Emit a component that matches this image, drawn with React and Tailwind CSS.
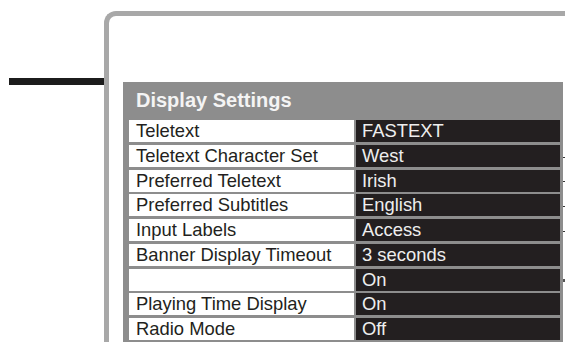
import React from "react";

const rows = [
  ["Teletext", "FASTEXT", false],
  ["Teletext Character Set", "West", true],
  ["Preferred Teletext", "Irish", true],
  ["Preferred Subtitles", "English", true],
  ["Input Labels", "Access", true],
  ["Banner Display Timeout", "3 seconds", false],
  ["", "On", "dot"],
  ["Playing Time Display", "On", false],
  ["Radio Mode", "Off", false],
];

export default function App() {
  return (
    <div
      className="w-[565px] h-[342px] overflow-hidden bg-white flex flex-col"
      style={{ fontFamily: '"Liberation Sans", Arial, sans-serif' }}
    >
      <div className="h-[1px] bg-[#dadada]" />
      <div className="flex pt-[11px] flex-1">
        <div className="w-[104px] shrink-0 flex flex-col">
          <div className="mt-[67px] ml-[9px] h-[7px] w-[96px] bg-[#1c1c1c]" />
        </div>
        <div className="flex-1 border-t-[5px] border-l-[5px] border-[#a8a8a8] rounded-tl-[12px] pt-[66px] pl-[14px] flex">
          <div className="w-[440px] shrink-0 bg-[#8d8d8d] flex flex-col pb-[4px]">
            <div className="h-[36px] pl-[13px] flex items-center text-[20px] font-bold text-[#f4f4f4] leading-none">
              Display Settings
            </div>
            <div className="pt-[2px] pl-[6px] pr-[3px] grid grid-cols-[225px_204px] gap-x-[2px] gap-y-[2.75px] auto-rows-[22px]">
              {rows.map(([label, value], i) => (
                <React.Fragment key={i}>
                  <div className="bg-white pl-[7px] text-[18.4px] leading-[22px] text-[#231f20] whitespace-nowrap overflow-hidden">
                    {label}
                  </div>
                  <div className="bg-[#231f20] pl-[6px] text-[18.4px] leading-[22px] text-[#eeeeee] whitespace-nowrap overflow-hidden">
                    {value}
                  </div>
                </React.Fragment>
              ))}
            </div>
          </div>
          <div className="w-[2px] shrink-0 flex flex-col pt-[38px]">
            {rows.map(([, , tick], i) => (
              <div key={i} className="h-[24.75px] flex items-center">
                {tick === true && <div className="h-[1px] w-[2px] bg-[#333]" />}
                {tick === "dot" && <div className="h-[3px] w-[2px] bg-[#555]" />}
              </div>
            ))}
          </div>
        </div>
      </div>
    </div>
  );
}
